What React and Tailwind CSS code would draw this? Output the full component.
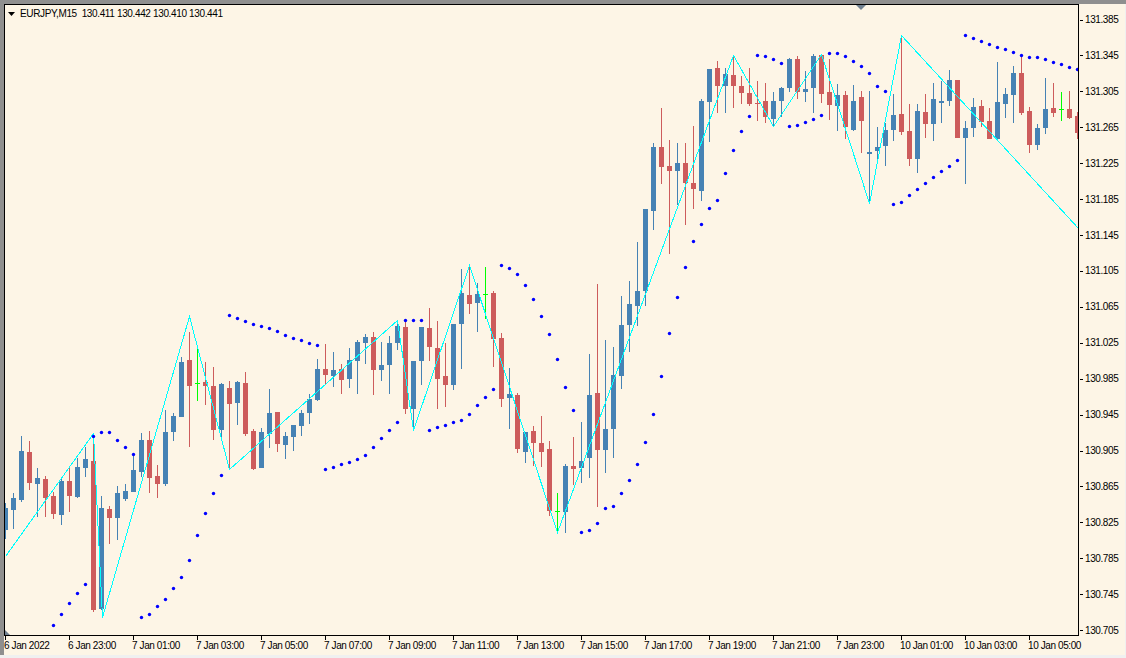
const candles = [
  ["b",503,539,508,530],["b",493,529,498,510],["b",436,502,451,500],["r",441,490,452,483],["b",468,517,478,484],
  ["r",476,517,479,498],["r",492,519,496,514],["b",477,525,481,515],["r",466,512,481,496],["b",458,498,467,497],
  ["b",447,477,459,468],["r",444,612,461,610],["b",496,610,508,609],["r",506,544,509,518],["b",486,540,493,518],
  ["b",484,501,491,499],["b",454,492,470,492],["b",433,477,440,472],["r",431,493,440,478],["r",465,498,476,484],
  ["b",410,486,432,484],["b",413,441,416,432],["b",357,417,362,417],["r",332,447,360,386],["g",349,401,383,384],
  ["r",362,405,382,386],["r",367,440,386,430],["b",383,437,384,430],["r",381,469,388,404],["b",381,425,382,403],
  ["r",372,436,383,434],["r",429,470,431,469],["b",428,468,432,468],["b",389,448,413,434],["r",412,452,412,444],
  ["b",432,459,436,445],["b",425,451,425,437],["b",410,436,413,426],["b",394,424,399,413],["b",359,401,369,400],
  ["r",344,385,369,375],["b",352,387,370,376],["r",364,394,369,380],["b",348,388,360,379],["b",340,394,342,361],
  ["b",334,364,337,343],["r",332,395,337,370],["b",342,381,365,370],["b",336,394,343,365],["b",324,350,326,343],
  ["r",320,414,327,409],["b",361,428,361,409],["b",327,385,327,361],["r",308,361,328,347],["r",321,409,348,379],
  ["r",343,407,376,385],["b",324,390,324,385],["b",269,369,293,324],["r",266,314,295,304],["b",283,332,294,303],
  ["g",267,319,294,295],["r",291,367,293,339],["r",333,407,338,399],["b",368,429,394,398],["r",393,453,395,449],
  ["b",432,463,432,452],["r",426,466,431,443],["r",416,467,443,452],["r",441,516,449,511],["g",493,532,511,512],
  ["b",464,533,466,512],["r",437,485,466,469],["b",422,483,461,468],["b",354,478,395,458],["r",284,507,393,450],
  ["b",340,473,429,450],["b",347,458,375,429],["b",296,389,325,376],["b",281,352,304,325],["b",242,326,291,306],
  ["b",209,306,209,291],["b",143,230,147,211],["r",108,184,147,167],["r",140,254,166,171],["b",143,205,163,171],
  ["r",143,225,163,183],["r",126,209,183,189],["b",99,201,101,191],["b",69,142,69,102],["r",61,113,68,86],
  ["b",68,113,74,86],["r",56,108,75,86],["r",76,104,86,93],["r",68,106,93,104],["r",81,121,103,104],
  ["r",83,123,101,117],["b",92,126,101,119],["b",87,117,88,101],["b",58,92,59,88],["r",56,99,59,92],
  ["b",71,102,89,92],["b",54,113,56,88],["r",54,103,55,94],["r",59,120,92,105],["b",84,131,95,106],
  ["r",91,139,95,127],["b",85,131,101,130],["r",91,153,97,121],["b",91,204,152,154],["b",127,159,147,151],
  ["b",123,166,130,146],["b",94,141,115,130],["r",37,135,114,132],["r",104,166,131,159],["b",104,173,111,159],
  ["r",94,138,112,124],["b",83,141,99,124],["b",81,123,101,103],["b",70,106,80,101],["r",80,138,80,138],
  ["b",121,184,128,138],["b",98,137,107,128],["r",100,127,106,122],["r",108,139,121,139],["b",62,139,102,139],
  ["b",88,118,94,104],["b",66,123,73,95],["r",55,115,73,113],["r",107,153,111,145],["b",124,150,128,145],
  ["b",78,134,109,128],["r",83,117,108,113],["g",92,121,109,110],["r",91,119,109,118],["r",112,139,116,133],
];

const zigzag = [[5,556],[93,433],[102,617],[189,316],[229,469],[397,320],[413,430],[469,265],[557,532],[733,55],[773,126],[821,54],[869,203],[901,35],[1078,228]];

const dots = [
  [53,625],[61,614],[69,603],[77,593],[85,584],[93,436],[101,432],[109,432],[117,440],[125,447],[133,454],
  [141,617],[149,614],[157,606],[165,599],[173,588],[181,577],[189,560],[197,535],[205,513],[213,493],[221,475],
  [229,315],[237,318],[245,321],[253,324],[261,326],[269,328],[277,331],[285,335],[293,338],[301,340],[309,343],[317,345],
  [325,469],[333,467],[341,464],[349,462],[357,459],[365,455],[373,447],[381,438],[389,430],[397,422],
  [405,320],[413,320],[421,320],
  [429,430],[437,427],[445,425],[453,422],[461,420],[469,414],[477,405],[485,397],[493,389],
  [501,265],[509,268],[517,274],[525,285],[533,299],[541,316],[549,334],[557,359],[565,387],[573,410],
  [581,532],[589,530],[597,523],[605,508],[613,506],[621,493],[629,480],[637,464],[645,442],[653,414],[661,376],[669,333],[677,297],[685,267],[693,241],[701,224],[709,208],[717,200],[725,173],[733,150],[741,131],[749,116],
  [757,55],[765,56],[773,59],[781,63],
  [789,126],[797,125],[805,122],[813,119],[821,115],
  [829,53],[837,53],[845,56],[853,61],[861,66],[869,73],[877,86],[885,91],
  [893,204],[901,202],[909,195],[917,189],[925,183],[933,177],[941,171],[949,166],[957,160],
  [965,35],[973,38],[981,41],[989,44],[997,47],[1005,49],[1013,52],[1021,55],[1029,57],[1037,57],[1045,59],[1053,62],[1061,64],[1069,67],[1077,69],
];

const colors = { b: "#4682b4", r: "#cd5c5c", g: "#00ff00" };

const prices = ["131.385","131.345","131.305","131.265","131.225","131.185","131.145","131.105","131.065","131.025","130.985","130.945","130.905","130.865","130.825","130.785","130.745","130.705"];
const times = ["6 Jan 2022","6 Jan 23:00","7 Jan 01:00","7 Jan 03:00","7 Jan 05:00","7 Jan 07:00","7 Jan 09:00","7 Jan 11:00","7 Jan 13:00","7 Jan 15:00","7 Jan 17:00","7 Jan 19:00","7 Jan 21:00","7 Jan 23:00","10 Jan 01:00","10 Jan 03:00","10 Jan 05:00"];

function Chart() {
  return (
    <svg className="block" width="1073" height="630" viewBox="5 5 1073 630">
      <g shapeRendering="crispEdges">
        {candles.map(([c, wt, wb, bt, bb], i) => {
          const x = 5 + 8 * i;
          const fill = colors[c];
          return (
            <g key={i} fill={fill}>
              <rect x={x} y={wt} width="1" height={wb - wt} />
              <rect x={x - 2} y={bt} width="5" height={Math.max(1, bb - bt)} />
            </g>
          );
        })}
        <polyline points={zigzag.map(([x, y]) => `${x + 0.5},${y + 0.5}`).join(" ")} fill="none" stroke="#00ffff" strokeWidth="1" />
      </g>
      {dots.map(([x, y], i) => (
        <circle key={i} cx={x + 0.5} cy={y + 0.5} r="1.7" fill="#0000ff" />
      ))}
      <polygon points="856,5 866,5 861,10" fill="#708090" />
      <polygon points="5,630 5,635 10,635" fill="#708090" />
    </svg>
  );
}

export default function App() {
  return (
    <div className="w-[1126px] h-[658px] flex flex-col bg-[#f0f0f0] overflow-hidden text-black text-[10px] tracking-[-0.4px] leading-[14px] font-['Liberation_Sans',sans-serif]">
      <div className="h-[4px] shrink-0 bg-[#8f8f8f]" />
      <div className="flex flex-1 min-h-0">
        <div className="w-[4px] shrink-0 bg-[#8f8f8f]" />
        <div className="w-[1121px] bg-[#fdf5e6] grid grid-cols-[1075px_46px] grid-rows-[632px_19px]">
          <div className="relative border border-black">
            <Chart />
            <div className="absolute left-[3px] top-[1px] h-[14px] mt-[1px] flex items-center gap-[5px] whitespace-pre tracking-[-0.36px]">
              <svg width="7" height="4" viewBox="0 0 7 4" className="block"><polygon points="0,0 7,0 3.5,4" fill="#000" /></svg>
              <span>EURJPY,M15  130.411 130.442 130.410 130.441</span>
            </div>
          </div>
          <div className="row-span-2 flex flex-col gap-[21.93px] pt-[9px]">
            {prices.map((p) => (
              <div key={p} className="h-[14px] shrink-0 flex items-center gap-[2px]">
                <div className="w-[3px] h-px bg-black ml-px" />
                <span>{p}</span>
              </div>
            ))}
          </div>
          <div className="flex pl-px">
            {times.map((t) => (
              <div key={t} className="w-[64px] shrink-0 flex flex-col items-start">
                <div className="w-px h-[4px] bg-black" />
                <span className="-ml-px mt-[-1px] whitespace-nowrap">{t}</span>
              </div>
            ))}
          </div>
        </div>
      </div>
      <div className="h-[3px] shrink-0 bg-[#f0f0f0]" />
    </div>
  );
}
